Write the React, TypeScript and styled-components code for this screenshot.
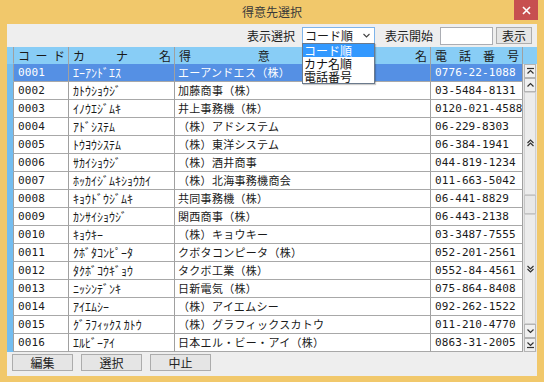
import styled, { createGlobalStyle } from "styled-components";

const GlobalStyle = createGlobalStyle`
  html, body {
    margin: 0;
    padding: 0;
  }
  body {
    font-family: "Noto Sans CJK JP", "Noto Sans", sans-serif;
    font-size: 12px;
    color: #1a1a1a;
  }
`;

const Window = styled.div`
  width: 544px;
  height: 382px;
  box-sizing: border-box;
  background: #f1c86b;
  display: flex;
  flex-direction: column;
`;

const TitleBar = styled.div`
  height: 24px;
  display: grid;
  grid-template-columns: 1fr auto 1fr;
  align-items: start;
`;

const Title = styled.div`
  grid-column: 2;
  padding-top: 4px;
  font-size: 12px;
  line-height: 16px;
  color: #3a3a3a;
`;

const CloseButton = styled.div`
  grid-column: 3;
  justify-self: end;
  margin-right: 6px;
  width: 24px;
  height: 20px;
  background: #c75050;
  color: #fff;
  display: flex;
  align-items: center;
  justify-content: center;
`;

const Client = styled.div`
  flex: 1;
  margin: 0 7px 6px 7px;
  background: #eeeeee;
  display: flex;
  flex-direction: column;
`;

const Toolbar = styled.div`
  height: 23px;
  display: flex;
  align-items: center;
  justify-content: flex-end;
  padding-right: 5px;
  position: relative;
  z-index: 2;
`;

const Label = styled.span<{ $gap: number }>`
  font-size: 12px;
  line-height: 14px;
  color: #222;
  margin-right: ${(p) => p.$gap}px;
`;

const SelectWrap = styled.div`
  position: relative;
  width: 73px;
  height: 17px;
  margin-right: 10px;
`;

const SelectBox = styled.div`
  box-sizing: border-box;
  height: 17px;
  border: 1px solid #7eb4ea;
  background: #fff;
  display: flex;
  align-items: center;
  justify-content: space-between;
  padding: 0 4px 0 2px;
  font-size: 12px;
  line-height: 15px;
`;

const DropList = styled.div`
  position: absolute;
  left: 0;
  top: 16px;
  width: 73px;
  box-sizing: border-box;
  border: 1px solid #6b7a8c;
  background: #fff;
  box-shadow: 1px 1px 1px rgba(0, 0, 0, 0.2);
`;

const DropItem = styled.div<{ $active?: boolean }>`
  height: 13px;
  line-height: 13px;
  font-size: 12px;
  padding-left: 1px;
  white-space: nowrap;
  background: ${(p) => (p.$active ? "#3399ff" : "#fff")};
  color: ${(p) => (p.$active ? "#fff" : "#111")};
`;

const TextInput = styled.div`
  box-sizing: border-box;
  width: 53px;
  height: 18px;
  border: 1px solid #abadb3;
  background: #fff;
  margin-right: 3px;
`;

const FlatButton = styled.div<{ $w: number }>`
  box-sizing: border-box;
  width: ${(p) => p.$w}px;
  height: 17px;
  border: 1px solid #acacac;
  background: #e5e5e5;
  display: flex;
  align-items: center;
  justify-content: center;
  font-size: 12px;
  line-height: 14px;
  color: #222;
`;

const GridArea = styled.div`
  display: flex;
  height: 305px;
`;

const Table = styled.div`
  display: flex;
  flex-direction: column;
  width: 516px;
`;

const Row = styled.div<{ $head?: boolean; $sel?: boolean }>`
  display: grid;
  grid-template-columns: 7px 55px 106px 256px 92px;
  height: ${(p) => (p.$head ? 17 : 18)}px;
  background: ${(p) => (p.$head ? "#88cdf6" : p.$sel ? "#5590e4" : "#fff")};
  color: ${(p) => (p.$sel ? "#fff" : "#1a1a1a")};
`;

const Strip = styled.div<{ $head?: boolean }>`
  background: ${(p) => (p.$head ? "#88cdf6" : "#74bdf0")};
  border-right: 1px solid #a0a0a0;
  border-bottom: 1px solid ${(p) => (p.$head ? "#88cdf6" : "#74bdf0")};
`;

const HeadCell = styled.div`
  box-sizing: border-box;
  display: flex;
  justify-content: space-between;
  align-items: center;
  padding: 0 3px 0 4px;
  border-right: 1px solid #a0a0a0;
  font-size: 12px;
  line-height: 14px;
  color: #1a1a1a;
`;

const Cell = styled.div<{ $kind: "num" | "kana" | "name" }>`
  box-sizing: border-box;
  border-right: 1px solid #a0a0a0;
  border-bottom: 1px solid #a8a8a8;
  padding-left: ${(p) => (p.$kind === "name" ? 3 : 4)}px;
  white-space: nowrap;
  overflow: hidden;
  font-family: ${(p) =>
    p.$kind === "num"
      ? '"DejaVu Sans Mono", "Liberation Mono", monospace'
      : '"Noto Sans CJK JP", sans-serif'};
  font-size: ${(p) => (p.$kind === "name" ? 11 : p.$kind === "num" ? 11 : 12)}px;
  letter-spacing: ${(p) => (p.$kind === "name" ? 0.3 : p.$kind === "num" ? 0.1 : 0)}px;
  line-height: 17px;
`;

const ScrollBar = styled.div`
  width: 14px;
  display: flex;
  flex-direction: column;
  background: #e6e6e6;
`;

const ScrollHead = styled.div`
  height: 17px;
  background: #88cdf6;
`;

const ScrollButton = styled.div`
  box-sizing: border-box;
  height: 14px;
  margin: 0 1px;
  border: 1px solid #b4b4b4;
  background: #f0f0f0;
  display: flex;
  align-items: center;
  justify-content: center;
`;

const Track = styled.div<{ $h: number }>`
  box-sizing: border-box;
  height: ${(p) => p.$h}px;
  margin: 0 1px;
  border: 1px solid #d0d0d0;
  background: #ececec;
  display: flex;
  align-items: center;
  justify-content: center;
`;

const Thumb = styled.div`
  box-sizing: border-box;
  height: 20px;
  margin: 0 1px;
  border: 1px solid #c4c4c4;
  background: #e8e8e8;
`;

const Footer = styled.div`
  flex: 1;
  display: flex;
  align-items: flex-start;
  gap: 8px;
  padding: 2px 0 0 5px;
`;

type Glyph = "top" | "up" | "pgup" | "pgdn" | "down" | "bottom";

function Arrow({ kind }: { kind: Glyph }) {
  const s = { fill: "none", stroke: "#333", strokeWidth: 1.2 };
  return (
    <svg width="9" height="8" viewBox="0 0 9 8">
      {kind === "top" && (
        <>
          <path d="M1 1.5h7" {...s} />
          <path d="M1.5 6.5l3-3 3 3" {...s} />
        </>
      )}
      {kind === "up" && <path d="M1.5 5.5l3-3 3 3" {...s} />}
      {kind === "pgup" && (
        <>
          <path d="M1.5 4l3-3 3 3" {...s} />
          <path d="M1.5 7l3-3 3 3" {...s} />
        </>
      )}
      {kind === "pgdn" && (
        <>
          <path d="M1.5 1l3 3 3-3" {...s} />
          <path d="M1.5 4l3 3 3-3" {...s} />
        </>
      )}
      {kind === "down" && <path d="M1.5 2.5l3 3 3-3" {...s} />}
      {kind === "bottom" && (
        <>
          <path d="M1.5 1.5l3 3 3-3" {...s} />
          <path d="M1 6.5h7" {...s} />
        </>
      )}
    </svg>
  );
}

const rows = [
  ["0001", "ｴｰｱﾝﾄﾞｴｽ", "エーアンドエス（株）", "0776-22-1088"],
  ["0002", "ｶﾄｳｼｮｳｼﾞ", "加藤商事（株）", "03-5484-8131"],
  ["0003", "ｲﾉｳｴｼﾞﾑｷ", "井上事務機（株）", "0120-021-4588"],
  ["0004", "ｱﾄﾞｼｽﾃﾑ", "（株）アドシステム", "06-229-8303"],
  ["0005", "ﾄｳﾖｳｼｽﾃﾑ", "（株）東洋システム", "06-384-1941"],
  ["0006", "ｻｶｲｼｮｳｼﾞ", "（株）酒井商事", "044-819-1234"],
  ["0007", "ﾎｯｶｲｼﾞﾑｷｼｮｳｶｲ", "（株）北海事務機商会", "011-663-5042"],
  ["0008", "ｷｮｳﾄﾞｳｼﾞﾑｷ", "共同事務機（株）", "06-441-8829"],
  ["0009", "ｶﾝｻｲｼｮｳｼﾞ", "関西商事（株）", "06-443-2138"],
  ["0010", "ｷｮｳｷｰ", "（株）キョウキー", "03-3487-7555"],
  ["0011", "ｸﾎﾞﾀｺﾝﾋﾟｰﾀ", "クボタコンピータ（株）", "052-201-2561"],
  ["0012", "ﾀｸﾎﾞｺｳｷﾞｮｳ", "タクボ工業（株）", "0552-84-4561"],
  ["0013", "ﾆｯｼﾝﾃﾞﾝｷ", "日新電気（株）", "075-864-8408"],
  ["0014", "ｱｲｴﾑｼｰ", "（株）アイエムシー", "092-262-1522"],
  ["0015", "ｸﾞﾗﾌｨｯｸｽ ｶﾄｳ", "（株）グラフィックスカトウ", "011-210-4770"],
  ["0016", "ｴﾙﾋﾞｰｱｲ", "日本エル・ビー・アイ（株）", "0863-31-2005"],
];

const headers = [
  ["コ", "ー", "ド"],
  ["カ", "ナ", "名"],
  ["得", "意", "先", "名"],
  ["電", "話", "番", "号"],
];

export default function App() {
  return (
    <>
      <GlobalStyle />
      <Window>
        <TitleBar>
          <Title>得意先選択</Title>
          <CloseButton>
            <svg width="9" height="9" viewBox="0 0 9 9">
              <path d="M1 1l7 7M8 1l-7 7" stroke="#fff" strokeWidth="1.6" />
            </svg>
          </CloseButton>
        </TitleBar>
        <Client>
          <Toolbar>
            <Label $gap={7}>表示選択</Label>
            <SelectWrap>
              <SelectBox>
                <span>コード順</span>
                <svg width="7" height="5" viewBox="0 0 7 5">
                  <path d="M0.5 1l3 3 3-3" fill="none" stroke="#444" strokeWidth="1.1" />
                </svg>
              </SelectBox>
              <DropList>
                <DropItem $active>コード順</DropItem>
                <DropItem>カナ名順</DropItem>
                <DropItem>電話番号</DropItem>
              </DropList>
            </SelectWrap>
            <Label $gap={7}>表示開始</Label>
            <TextInput />
            <FlatButton $w={36}>表示</FlatButton>
          </Toolbar>
          <GridArea>
            <Table>
              <Row $head>
                <Strip $head />
                {headers.map((h, i) => (
                  <HeadCell key={i}>
                    {h.map((c, j) => (
                      <span key={j}>{c}</span>
                    ))}
                  </HeadCell>
                ))}
              </Row>
              {rows.map((r, i) => (
                <Row key={r[0]} $sel={i === 0}>
                  <Strip />
                  <Cell $kind="num">{r[0]}</Cell>
                  <Cell $kind="kana">{r[1]}</Cell>
                  <Cell $kind="name">{r[2]}</Cell>
                  <Cell $kind="num">{r[3]}</Cell>
                </Row>
              ))}
            </Table>
            <ScrollBar>
              <ScrollHead />
              <ScrollButton>
                <Arrow kind="top" />
              </ScrollButton>
              <ScrollButton>
                <Arrow kind="up" />
              </ScrollButton>
              <Track $h={103}>
                <Arrow kind="pgup" />
              </Track>
              <Thumb />
              <Track $h={110}>
                <Arrow kind="pgdn" />
              </Track>
              <ScrollButton>
                <Arrow kind="down" />
              </ScrollButton>
              <ScrollButton>
                <Arrow kind="bottom" />
              </ScrollButton>
            </ScrollBar>
          </GridArea>
          <Footer>
            <FlatButton $w={61}>編集</FlatButton>
            <FlatButton $w={61}>選択</FlatButton>
            <FlatButton $w={61}>中止</FlatButton>
          </Footer>
        </Client>
      </Window>
    </>
  );
}
